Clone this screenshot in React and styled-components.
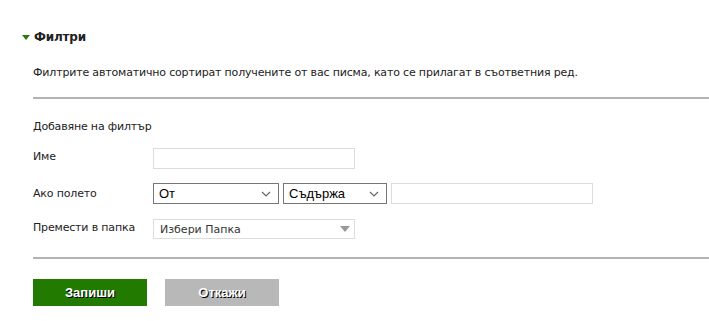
import styled, { createGlobalStyle } from 'styled-components';

const GlobalStyle = createGlobalStyle`
  html, body {
    margin: 0;
    padding: 0;
    background: #fff;
  }
  body {
    font-family: "DejaVu Sans", Verdana, sans-serif;
    font-size: 11px;
    letter-spacing: -0.17px;
    color: #222;
  }
`;

const Page = styled.div`
  width: 709px;
  padding: 28px 0 0 33px;
  box-sizing: border-box;
`;

const Header = styled.div`
  display: flex;
  align-items: center;
  margin-left: -13px;
  height: 18px;
  gap: 4px;
`;

const Arrow = styled.span`
  width: 0;
  height: 0;
  border-left: 4px solid transparent;
  border-right: 4px solid transparent;
  border-top: 5px solid #2f7a0c;
  margin-left: 2px;
`;

const Title = styled.h3`
  margin: 0;
  font-size: 12px;
  font-weight: bold;
  color: #222;
`;

const Description = styled.p`
  margin: 20px 0 0;
  line-height: 14px;
`;

const Rule = styled.hr`
  border: 0;
  border-top: 2px solid #b3b3b3;
  margin: ${p => p.$top}px 0 0;
`;

const SubTitle = styled.div`
  margin-top: 21px;
  line-height: 14px;
`;

const Form = styled.div`
  display: flex;
  flex-direction: column;
  margin-top: 14px;
`;

const Row = styled.div`
  display: flex;
  align-items: flex-start;
  height: 21px;
  margin-top: ${p => p.$gap || 0}px;
`;

const Label = styled.label`
  width: 120px;
  line-height: 14px;
  padding-top: ${p => p.$pad || 2}px;
`;

const Fields = styled.div`
  display: flex;
  gap: 4px;
`;

const TextInput = styled.input`
  box-sizing: border-box;
  width: ${p => p.$w}px;
  height: 21px;
  border: 1px solid #dcdcdc;
  padding: 0 4px;
  font: inherit;
  outline: none;
`;

const chevron = encodeURIComponent(
  '<svg xmlns="http://www.w3.org/2000/svg" width="10" height="6" viewBox="0 0 10 6"><path d="M1 1l4 4 4-4" fill="none" stroke="#666" stroke-width="1.2"/></svg>'
);
const tri = encodeURIComponent(
  '<svg xmlns="http://www.w3.org/2000/svg" width="10" height="6" viewBox="0 0 10 6"><path d="M0 0h10L5 6z" fill="#9a9a9a"/></svg>'
);

const NativeSelect = styled.select`
  box-sizing: border-box;
  width: ${p => p.$w}px;
  height: 21px;
  appearance: none;
  border: 1px solid #767676;
  border-radius: 0;
  background: #fff url("data:image/svg+xml,${chevron}") no-repeat right 7px center;
  padding: 0 5px;
  font-family: "Liberation Sans", Arial, sans-serif;
  font-size: 13px;
  letter-spacing: 0;
  color: #000;
  outline: none;
`;

const FolderSelect = styled.select`
  box-sizing: border-box;
  width: 202px;
  height: 20px;
  appearance: none;
  border: 1px solid #dcdcdc;
  border-radius: 0;
  background: #fff url("data:image/svg+xml,${tri}") no-repeat right 4px center;
  padding: 0 6px;
  font: inherit;
  color: #333;
  outline: none;
`;

const Buttons = styled.div`
  display: flex;
  gap: 18px;
  margin-top: 20px;
`;

const Button = styled.button`
  width: 114px;
  height: 27px;
  border: 0;
  background: ${p => (p.$primary ? '#237a00' : '#b8b8b8')};
  color: #fff;
  font-family: "Liberation Sans", Arial, sans-serif;
  font-size: 13px;
  font-weight: bold;
  text-shadow: 1px 1px 0 #000;
  cursor: pointer;
`;

export default function App() {
  return (
    <>
      <GlobalStyle />
      <Page>
        <Header>
          <Arrow />
          <Title>Филтри</Title>
        </Header>
        <Description>
          Филтрите автоматично сортират получените от вас писма, като се прилагат в съответния ред.
        </Description>
        <Rule $top={17} />
        <SubTitle>Добавяне на филтър</SubTitle>
        <Form>
          <Row>
            <Label>Име</Label>
            <TextInput $w={202} />
          </Row>
          <Row $gap={14}>
            <Label $pad={4}>Ако полето</Label>
            <Fields>
              <NativeSelect $w={126} defaultValue="from">
                <option value="from">От</option>
                <option value="to">До</option>
                <option value="subject">Тема</option>
              </NativeSelect>
              <NativeSelect $w={104} defaultValue="contains">
                <option value="contains">Съдържа</option>
                <option value="not">Не съдържа</option>
              </NativeSelect>
              <TextInput $w={202} />
            </Fields>
          </Row>
          <Row $gap={15}>
            <Label>Премести в папка</Label>
            <FolderSelect defaultValue="">
              <option value="">Избери Папка</option>
            </FolderSelect>
          </Row>
        </Form>
        <Rule $top={17} />
        <Buttons>
          <Button $primary>Запиши</Button>
          <Button>Откажи</Button>
        </Buttons>
      </Page>
    </>
  );
}
